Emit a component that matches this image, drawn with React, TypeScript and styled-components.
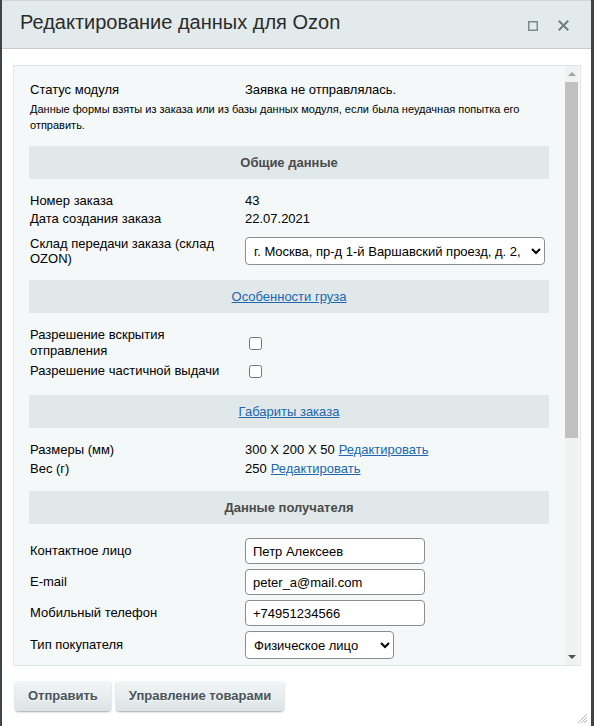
import React from "react";
import styled, { createGlobalStyle } from "styled-components";

const GlobalStyle = createGlobalStyle`
  html, body {
    margin: 0;
    padding: 0;
    background: #3e444a;
    overflow: hidden;
  }
  body {
    font-family: "Liberation Sans", Arial, sans-serif;
    font-size: 13px;
    color: #000;
  }
  * { box-sizing: border-box; }
`;

const Dialog = styled.div`
  position: relative;
  margin: 0 3px 0 2px;
  height: 726px;
  background: #fff;
  display: flex;
  flex-direction: column;
`;

const TitleBar = styled.div`
  height: 49px;
  flex: none;
  background: #e2eaec;
  border-top: 1px solid #cdd6d8;
  border-bottom: 1px solid #c3ccce;
  display: flex;
  align-items: center;
  justify-content: space-between;
  padding: 0 22px 0 18px;
`;

const Title = styled.div`
  font-family: "Liberation Sans", Arial, sans-serif;
  font-size: 20px;
  color: #2b2b2b;
  margin-top: -4px;
`;

const TitleIcons = styled.div`
  display: flex;
  align-items: center;
  gap: 18px;
  margin-top: 2px;
`;

const IconButton = styled.span`
  display: flex;
  align-items: center;
  justify-content: center;
  width: 12px;
  height: 12px;
`;

const Body = styled.div`
  padding: 16px 10px 0 11px;
`;

const Panel = styled.div`
  height: 601px;
  border: 1px solid #dfe6e8;
  background: #f4f8f9;
  display: flex;
`;

const Content = styled.div`
  flex: 1;
  overflow: hidden;
  padding: 15px 16px 0 15px;
`;

const Track = styled.div`
  width: 13px;
  margin-right: 2px;
  background: #f0f1f1;
  display: flex;
  flex-direction: column;
  align-items: stretch;
`;

const Arrow = styled.div<{ $down?: boolean }>`
  height: 16px;
  display: flex;
  align-items: center;
  justify-content: center;
  flex: none;
  &::before {
    content: "";
    width: 0;
    height: 0;
    border-left: 4px solid transparent;
    border-right: 4px solid transparent;
    ${(p) =>
      p.$down
        ? "border-top: 4px solid #505050;"
        : "border-bottom: 4px solid #a3a3a3;"}
  }
`;

const Thumb = styled.div`
  height: 356px;
  background: #c1c1c1;
  flex: none;
`;

const Spacer = styled.div`
  flex: 1;
`;

const Row = styled.div<{ $mt?: number; $lh?: number }>`
  display: grid;
  grid-template-columns: 216px 1fr;
  align-items: center;
  margin-top: ${(p) => p.$mt ?? 0}px;
  line-height: ${(p) => p.$lh ?? 18}px;
`;

const Label = styled.div<{ $lh?: number }>`
  padding-left: 1px;
  line-height: ${(p) => p.$lh ?? 18}px;
`;

const Value = styled.div`
  display: flex;
  align-items: center;
`;

const Note = styled.div`
  font-size: 11px;
  line-height: 16px;
  padding-left: 1px;
  margin-top: 2px;
`;

const SectionHeader = styled.div<{ $mt: number; $link?: boolean }>`
  margin-top: ${(p) => p.$mt}px;
  height: 33px;
  background: #e0e8ea;
  display: flex;
  align-items: center;
  justify-content: center;
  font-size: 13px;
  font-weight: ${(p) => (p.$link ? "normal" : "bold")};
  color: #4b4b4b;
`;

const Link = styled.a`
  color: #2067b0;
  text-decoration: underline;
  cursor: pointer;
`;

const InlineLink = styled(Link)`
  margin-left: 4px;
`;

const Select = styled.select<{ $w: number }>`
  width: ${(p) => p.$w}px;
  height: 28px;
  font-family: "Liberation Sans", Arial, sans-serif;
  font-size: 13px;
  color: #000;
  background: #fff;
  border: 1px solid #8d8d8d;
  border-radius: 4px;
  padding: 0 4px;
`;

const Input = styled.input`
  width: 180px;
  height: 26px;
  font-family: "Liberation Sans", Arial, sans-serif;
  font-size: 13px;
  color: #000;
  background: #fff;
  border: 1px solid #8d8d8d;
  border-radius: 4px;
  padding: 0 7px;
  outline: none;
`;

const Checkbox = styled.input`
  width: 13px;
  height: 13px;
  margin: 0 0 0 4px;
`;

const Footer = styled.div`
  display: flex;
  gap: 5px;
  padding: 14px 0 0 13px;
`;

const Button = styled.button`
  height: 31px;
  padding: 0 13px;
  font-family: "Liberation Sans", Arial, sans-serif;
  font-size: 13px;
  font-weight: bold;
  color: #4a545c;
  background: linear-gradient(#f3f6f7, #dde4e6);
  border: none;
  border-radius: 4px;
  box-shadow: 0 1px 2px rgba(0, 0, 0, 0.35), inset 0 1px 0 #fff;
  text-shadow: 0 1px rgba(255, 255, 255, 0.7);
  cursor: pointer;
`;

const Resize = styled.div`
  position: absolute;
  right: 3px;
  bottom: 3px;
  width: 11px;
  height: 11px;
`;

export default function App() {
  return (
    <>
      <GlobalStyle />
      <Dialog>
        <TitleBar>
          <Title>Редактирование данных для Ozon</Title>
          <TitleIcons>
            <IconButton>
              <svg width="10" height="10" viewBox="0 0 10 10">
                <rect x="0.75" y="0.75" width="8.5" height="8.5" fill="none" stroke="#7b8a90" strokeWidth="1.5" />
              </svg>
            </IconButton>
            <IconButton>
              <svg width="11" height="11" viewBox="0 0 11 11">
                <path d="M1.5 1.5 L9.5 9.5 M9.5 1.5 L1.5 9.5" stroke="#6f7e84" strokeWidth="2" strokeLinecap="square" />
              </svg>
            </IconButton>
          </TitleIcons>
        </TitleBar>
        <Body>
          <Panel>
            <Content>
              <Row>
                <Label>Статус модуля</Label>
                <Value>Заявка не отправлялась.</Value>
              </Row>
              <Note>
                Данные формы взяты из заказа или из базы данных модуля, если была неудачная попытка его
                отправить.
              </Note>

              <SectionHeader $mt={13}>Общие данные</SectionHeader>
              <Row $mt={13}>
                <Label>Номер заказа</Label>
                <Value>43</Value>
              </Row>
              <Row>
                <Label>Дата создания заказа</Label>
                <Value>22.07.2021</Value>
              </Row>
              <Row $mt={8}>
                <Label $lh={15}>Склад передачи заказа (склад OZON)</Label>
                <Value>
                  <Select $w={300} defaultValue="1">
                    <option value="1">г. Москва, пр-д 1-й Варшавский проезд, д. 2, стр. 1</option>
                  </Select>
                </Value>
              </Row>

              <SectionHeader $mt={14} $link>
                <Link>Особенности груза</Link>
              </SectionHeader>
              <Row $mt={14}>
                <Label $lh={16}>Разрешение вскрытия отправления</Label>
                <Value>
                  <Checkbox type="checkbox" />
                </Value>
              </Row>
              <Row $mt={4}>
                <Label $lh={16}>Разрешение частичной выдачи</Label>
                <Value>
                  <Checkbox type="checkbox" />
                </Value>
              </Row>

              <SectionHeader $mt={16} $link>
                <Link>Габариты заказа</Link>
              </SectionHeader>
              <Row $mt={13}>
                <Label>Размеры (мм)</Label>
                <Value>
                  300 X 200 X 50<InlineLink>Редактировать</InlineLink>
                </Value>
              </Row>
              <Row $mt={1}>
                <Label>Вес (г)</Label>
                <Value>
                  250<InlineLink>Редактировать</InlineLink>
                </Value>
              </Row>

              <SectionHeader $mt={13}>Данные получателя</SectionHeader>
              <Row $mt={14}>
                <Label>Контактное лицо</Label>
                <Value>
                  <Input defaultValue="Петр Алексеев" />
                </Value>
              </Row>
              <Row $mt={5}>
                <Label>E-mail</Label>
                <Value>
                  <Input defaultValue="peter_a@mail.com" />
                </Value>
              </Row>
              <Row $mt={5}>
                <Label>Мобильный телефон</Label>
                <Value>
                  <Input defaultValue="+74951234566" />
                </Value>
              </Row>
              <Row $mt={5}>
                <Label>Тип покупателя</Label>
                <Value>
                  <Select $w={149} defaultValue="1">
                    <option value="1">Физическое лицо</option>
                    <option value="2">Юридическое лицо</option>
                  </Select>
                </Value>
              </Row>
            </Content>
            <Track>
              <Arrow />
              <Thumb />
              <Spacer />
              <Arrow $down />
            </Track>
          </Panel>
        </Body>
        <Footer>
          <Button>Отправить</Button>
          <Button>Управление товарами</Button>
        </Footer>
        <Resize>
          <svg width="11" height="11" viewBox="0 0 11 11">
            <path d="M10 1 L1 10 M10 4 L4 10 M10 7 L7 10" stroke="#b5b5b5" strokeWidth="1" />
          </svg>
        </Resize>
      </Dialog>
    </>
  );
}
